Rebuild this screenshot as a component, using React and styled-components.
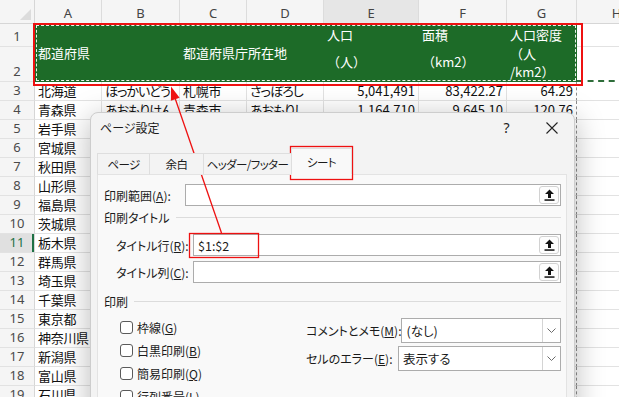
import React from 'react';
import styled, { createGlobalStyle } from 'styled-components';

const JP = `"Noto Sans CJK JP", "Noto Sans", sans-serif`;
const UI = `"Noto Sans", "Noto Sans CJK JP", sans-serif`;

const GlobalStyle = createGlobalStyle`
	html, body {
		margin: 0;
		padding: 0;
		background: #fff;
		overflow: hidden;
	}
`;

const ROW_HEAD_W = 35;
const COLS = [
	{ key: 'A', w: 67 },
	{ key: 'B', w: 78, kana: true },
	{ key: 'C', w: 67 },
	{ key: 'D', w: 77, kana: true },
	{ key: 'E', w: 95, hover: true, num: true },
	{ key: 'F', w: 88, num: true },
	{ key: 'G', w: 70, num: true },
	{ key: 'H', w: 80 },
];

const PREFS = [
	'岩手県', '宮城県', '秋田県', '山形県', '福島県', '茨城県', '栃木県', '群馬県',
	'埼玉県', '千葉県', '東京都', '神奈川県', '新潟県', '富山県', '石川県',
];

const ROWS = [
	{ n: 3, cells: ['北海道', 'ほっかいどう', '札幌市', 'さっぽろし', '5,041,491', '83,422.27', '64.29'] },
	{ n: 4, cells: ['青森県', 'あおもりけん', '青森市', 'あおもりし', '1,164,710', '9,645.10', '120.76'] },
	...PREFS.map((p, i) => ({ n: i + 5, cells: [p] })),
];

const Page = styled.div`
	position: relative;
	width: 619px;
	height: 397px;
	overflow: hidden;
	font-family: ${JP};
	font-feature-settings: 'palt';
	color: #111;
`;

/* ---------- sheet ---------- */

const Sheet = styled.div`
	display: flex;
	flex-direction: column;
`;

const HeaderRow = styled.div`
	display: flex;
	height: 24px;
	background: #f5f5f5;
	border-bottom: 1px solid #d6d6d6;
	box-sizing: border-box;
`;

const Corner = styled.div`
	position: relative;
	flex: 0 0 ${ROW_HEAD_W}px;
	border-right: 1px solid #d6d6d6;
	box-sizing: border-box;
	&::after {
		content: '';
		position: absolute;
		right: 3px;
		bottom: 3px;
		border-left: 11px solid transparent;
		border-bottom: 11px solid #dcdcdc;
	}
`;

const ColHead = styled.div`
	flex: 0 0 ${p => p.$w}px;
	box-sizing: border-box;
	border-right: 1px solid #dcdcdc;
	background: ${p => (p.$hover ? '#e6e6e6' : 'transparent')};
	text-align: center;
	font-family: ${UI};
	font-size: 13px;
	color: #444;
	padding-top: 3px;
	line-height: 21px;
`;

const Row = styled.div`
	display: flex;
	flex-shrink: 0;
	height: ${p => p.$h}px;
`;

const RowHead = styled.div`
	width: ${ROW_HEAD_W}px;
	height: ${p => p.$h}px;
	flex-shrink: 0;
	box-sizing: border-box;
	display: flex;
	align-items: flex-end;
	justify-content: center;
	padding-bottom: 1px;
	line-height: 18px;
	font-family: ${UI};
	font-size: 13px;
	color: ${p => (p.$active ? '#1e7145' : '#4a4a4a')};
	background: ${p => (p.$active ? '#e0e0e0' : '#f5f5f5')};
	border-right: 1px solid #d6d6d6;
	border-bottom: 1px solid #e2e2e2;
	box-shadow: ${p => (p.$active ? 'inset -2px 0 #1e7145' : 'none')};
`;

const RowHeadStack = styled.div`
	flex: 0 0 ${ROW_HEAD_W}px;
	display: flex;
	flex-direction: column;
`;

const TitleBand = styled.div`
	flex: 0 0 542px;
	min-width: 0;
	display: flex;
	height: 58px;
	box-sizing: border-box;
	background: #1d6b28;
	outline: 1px dashed rgba(255, 255, 255, 0.9);
	outline-offset: -2px;
	color: #fff;
	font-size: 13px;
	font-feature-settings: normal;
`;

const TitleCell = styled.div`
	flex: 0 0 ${p => p.$w}px;
	width: ${p => p.$w}px;
	min-width: 0;
	box-sizing: border-box;
	padding: ${p => p.$pt || 0}px 3px 0;
	display: flex;
	flex-direction: column;
	justify-content: ${p => (p.$center ? 'center' : 'flex-start')};
	gap: ${p => p.$gap || 0}px;
	line-height: ${p => p.$lh || 18}px;
	white-space: nowrap;
	overflow: visible;
`;

const BlankStack = styled.div`
	flex: 0 0 ${p => p.$w}px;
	display: flex;
	flex-direction: column;
`;

const BlankCell = styled.div`
	height: ${p => p.$h}px;
	box-sizing: border-box;
	border-bottom: ${p => (p.$break ? '2px dashed #2e6d3a' : '1px solid #e2e2e2')};
`;

const Cell = styled.div`
	flex: 0 0 ${p => p.$w}px;
	min-width: 0;
	box-sizing: border-box;
	border-right: ${p => (p.$break ? '1px dashed #8c8c8c' : '1px solid #e2e2e2')};
	border-bottom: 1px solid #e2e2e2;
	padding: 0 3px;
	text-align: ${p => (p.$num ? 'right' : 'left')};
	white-space: nowrap;
	overflow: hidden;
	font-size: 13px;
	line-height: 18px;
	letter-spacing: ${p => (p.$kana ? '-1px' : p.$num ? '0' : '-0.3px')};
	font-feature-settings: ${p => (p.$num ? 'normal' : "'palt'")};
`;

/* ---------- dialog ---------- */

const Dialog = styled.div`
	position: absolute;
	left: 90px;
	top: 112px;
	width: 485px;
	height: 320px;
	box-sizing: border-box;
	display: flex;
	flex-direction: column;
	background: #f3f3f3;
	border: 1px solid #cdcdcd;
	border-radius: 8px;
	box-shadow: 0 6px 30px rgba(0, 0, 0, 0.28);
	font-size: 12px;
	color: #1b1b1b;
`;

const TitleBar = styled.div`
	display: flex;
	align-items: center;
	height: 29px;
	padding-left: 9px;
`;

const TitleText = styled.div`
	flex: 1;
`;

const TitleButton = styled.div`
	width: 45px;
	height: 29px;
	display: flex;
	align-items: center;
	justify-content: center;
	font-family: ${UI};
	font-size: 14px;
	color: #222;
`;

const TabStrip = styled.div`
	display: flex;
	align-items: flex-end;
	height: 33px;
	padding-left: 6px;
	position: relative;
	z-index: 1;
	margin-bottom: -1px;
`;

const Tab = styled.div`
	width: ${p => p.$w}px;
	height: ${p => (p.$active ? 27 : 22)}px;
	box-sizing: border-box;
	display: flex;
	align-items: center;
	justify-content: center;
	white-space: nowrap;
	font-size: 11.5px;
	letter-spacing: -0.6px;
	border: 1px solid #dedede;
	border-bottom: ${p => (p.$active ? '1px solid #f9f9f9' : '1px solid #e3e3e3')};
	background: ${p => (p.$active ? '#f9f9f9' : '#f3f3f3')};
	& + & {
		margin-left: -1px;
	}
`;

const Panel = styled.div`
	flex: 1;
	margin: 0 7px 0 6px;
	padding: 0 5px 0 6px;
	background: #f9f9f9;
	border: 1px solid #e3e3e3;
	display: flex;
	flex-direction: column;
`;

const FieldRow = styled.div`
	display: flex;
	align-items: center;
	height: 22px;
	margin-top: ${p => p.$mt}px;
	padding-left: ${p => p.$indent || 0}px;
`;

const Label = styled.div`
	flex: 0 0 ${p => p.$w}px;
	white-space: nowrap;
`;

const TextBox = styled.div`
	flex: 1;
	height: 22px;
	box-sizing: border-box;
	display: flex;
	align-items: center;
	justify-content: space-between;
	background: #fff;
	border: 1px solid #acacac;
	padding: 0 1px 0 4px;
	font-size: 12.5px;
`;

const PickButton = styled.div`
	width: 20px;
	height: 18px;
	box-sizing: border-box;
	display: flex;
	align-items: center;
	justify-content: center;
	background: #fdfdfd;
	border: 1px solid #d2d2d2;
	border-radius: 3px;
`;

const GroupTitle = styled.div`
	display: flex;
	align-items: center;
	gap: 6px;
	height: 16px;
	margin-top: ${p => p.$mt}px;
	&::after {
		content: '';
		flex: 1;
		height: 1px;
		background: #dcdcdc;
	}
`;

const Options = styled.div`
	display: flex;
`;

const CheckList = styled.div`
	flex: 0 0 202px;
	box-sizing: border-box;
	padding: 7px 0 0 16px;
	display: flex;
	flex-direction: column;
`;

const CheckRow = styled.div`
	display: flex;
	align-items: center;
	gap: 4px;
	height: 23px;
`;

const Box = styled.div`
	width: 13px;
	height: 13px;
	box-sizing: border-box;
	border: 1px solid #5a5a5a;
	border-radius: 3px;
	background: #fff;
`;

const SelectList = styled.div`
	flex: 1;
	padding-top: 9px;
	display: flex;
	flex-direction: column;
	gap: 3px;
`;

const SelectRow = styled.div`
	display: flex;
	align-items: center;
	height: 25px;
`;

const Select = styled.div`
	flex: 1;
	height: 25px;
	box-sizing: border-box;
	display: flex;
	background: #fff;
	border: 1px solid #acacac;
`;

const SelectValue = styled.div`
	flex: 1;
	display: flex;
	align-items: center;
	padding-left: 4px;
	font-size: 12.5px;
`;

const SelectArrow = styled.div`
	flex: 0 0 17px;
	display: flex;
	align-items: center;
	justify-content: center;
	border-left: 1px solid #d4d4d4;
`;

const Annotations = styled.svg`
	position: absolute;
	left: 0;
	top: 0;
	pointer-events: none;
`;

const PickIcon = () => (
	<svg width="11" height="12" viewBox="0 0 11 12">
		<path d="M5.5 0.5 L10 5 H7 V9 H4 V5 H1 Z" fill="#111" />
		<rect x="0.5" y="10.3" width="10" height="1.5" fill="#111" />
	</svg>
);

const Chevron = () => (
	<svg width="9" height="5" viewBox="0 0 9 5">
		<polyline points="0.5,0.5 4.5,4.5 8.5,0.5" fill="none" stroke="#6b6b6b" strokeWidth="1" />
	</svg>
);

const CloseIcon = () => (
	<svg width="12" height="12" viewBox="0 0 12 12">
		<path d="M0.5 0.5 L11.5 11.5 M11.5 0.5 L0.5 11.5" stroke="#222" strokeWidth="1.1" />
	</svg>
);

const Hot = ({ text, k }) => {
	const [before, after] = text.split(`(${k})`);
	return (
		<>
			{before}(<u>{k}</u>){after}
		</>
	);
};

const TitleArea = () => (
	<Row $h={58}>
		<RowHeadStack>
			<RowHead $h={23}>1</RowHead>
			<RowHead $h={35}>2</RowHead>
		</RowHeadStack>
		<TitleBand>
			<TitleCell $w={67} $center>
				<span>都道府県</span>
			</TitleCell>
			<TitleCell $w={78} />
			<TitleCell $w={67} $center>
				<span>都道府県庁所在地</span>
			</TitleCell>
			<TitleCell $w={77} />
			<TitleCell $w={95} $pt={2} $gap={9}>
				<span>人口</span>
				<span>（人）</span>
			</TitleCell>
			<TitleCell $w={88} $pt={2} $gap={9}>
				<span>面積</span>
				<span>（km2）</span>
			</TitleCell>
			<TitleCell $w={70} $pt={2} $lh={18.5}>
				<span>人口密度</span>
				<span>（人</span>
				<span>/km2）</span>
			</TitleCell>
		</TitleBand>
		<BlankStack $w={80}>
			<BlankCell $h={23} />
			<BlankCell $h={35} $break />
		</BlankStack>
	</Row>
);

const PageSetupDialog = () => (
	<Dialog>
		<TitleBar>
			<TitleText>ページ設定</TitleText>
			<TitleButton>?</TitleButton>
			<TitleButton>
				<CloseIcon />
			</TitleButton>
		</TitleBar>
		<TabStrip>
			<Tab $w={53}>ページ</Tab>
			<Tab $w={55}>余白</Tab>
			<Tab $w={89}>ヘッダー/フッター</Tab>
			<Tab $w={61} $active>シート</Tab>
		</TabStrip>
		<Panel>
			<FieldRow $mt={9}>
				<Label $w={81}>
					<Hot text="印刷範囲(A):" k="A" />
				</Label>
				<TextBox>
					<span />
					<PickButton>
						<PickIcon />
					</PickButton>
				</TextBox>
			</FieldRow>
			<GroupTitle $mt={3}>印刷タイトル</GroupTitle>
			<FieldRow $mt={9} $indent={12}>
				<Label $w={77}>
					<Hot text="タイトル行(R):" k="R" />
				</Label>
				<TextBox>
					<span>$1:$2</span>
					<PickButton>
						<PickIcon />
					</PickButton>
				</TextBox>
			</FieldRow>
			<FieldRow $mt={5} $indent={12}>
				<Label $w={77}>
					<Hot text="タイトル列(C):" k="C" />
				</Label>
				<TextBox>
					<span />
					<PickButton>
						<PickIcon />
					</PickButton>
				</TextBox>
			</FieldRow>
			<GroupTitle $mt={10}>印刷</GroupTitle>
			<Options>
				<CheckList>
					{[
						['枠線(G)', 'G'],
						['白黒印刷(B)', 'B'],
						['簡易印刷(Q)', 'Q'],
						['行列番号(L)', 'L'],
					].map(([t, k]) => (
						<CheckRow key={k}>
							<Box />
							<span>
								<Hot text={t} k={k} />
							</span>
						</CheckRow>
					))}
				</CheckList>
				<SelectList>
					<SelectRow>
						<Label $w={92}>
							<Hot text="コメントとメモ(M):" k="M" />
						</Label>
						<Select>
							<SelectValue>(なし)</SelectValue>
							<SelectArrow>
								<Chevron />
							</SelectArrow>
						</Select>
					</SelectRow>
					<SelectRow>
						<Label $w={92}>
							<Hot text="セルのエラー(E):" k="E" />
						</Label>
						<Select>
							<SelectValue>表示する</SelectValue>
							<SelectArrow>
								<Chevron />
							</SelectArrow>
						</Select>
					</SelectRow>
				</SelectList>
			</Options>
		</Panel>
	</Dialog>
);

const App = () => (
	<Page>
		<GlobalStyle />
		<Sheet>
			<HeaderRow>
				<Corner />
				{COLS.map(c => (
					<ColHead key={c.key} $w={c.w} $hover={c.hover}>
						{c.key}
					</ColHead>
				))}
			</HeaderRow>
			<TitleArea />
			{ROWS.map(r => (
				<Row key={r.n} $h={19}>
					<RowHead $h={19} $active={r.n === 11}>
						{r.n}
					</RowHead>
					{COLS.map((c, i) => (
						<Cell
							key={c.key}
							$w={c.w}
							$num={c.num}
							$kana={c.kana}
							$break={c.key === 'G'}
						>
							{r.cells[i] || ''}
						</Cell>
					))}
				</Row>
			))}
		</Sheet>
		<PageSetupDialog />
		<Annotations width="619" height="397" viewBox="0 0 619 397">
			<g fill="none" stroke="#ee1111">
				<rect x="34" y="24" width="548" height="61" strokeWidth="2" />
				<rect x="290.5" y="146.5" width="62" height="33" strokeWidth="1.3" />
				<rect x="189.5" y="233.5" width="69" height="24" strokeWidth="1.3" />
				<line x1="221.5" y1="233" x2="175" y2="98" strokeWidth="1.3" />
			</g>
			<path d="M171 86.5 L179.6 97.8 L170.9 100.8 Z" fill="#ee1111" />
		</Annotations>
	</Page>
);

export default App;
